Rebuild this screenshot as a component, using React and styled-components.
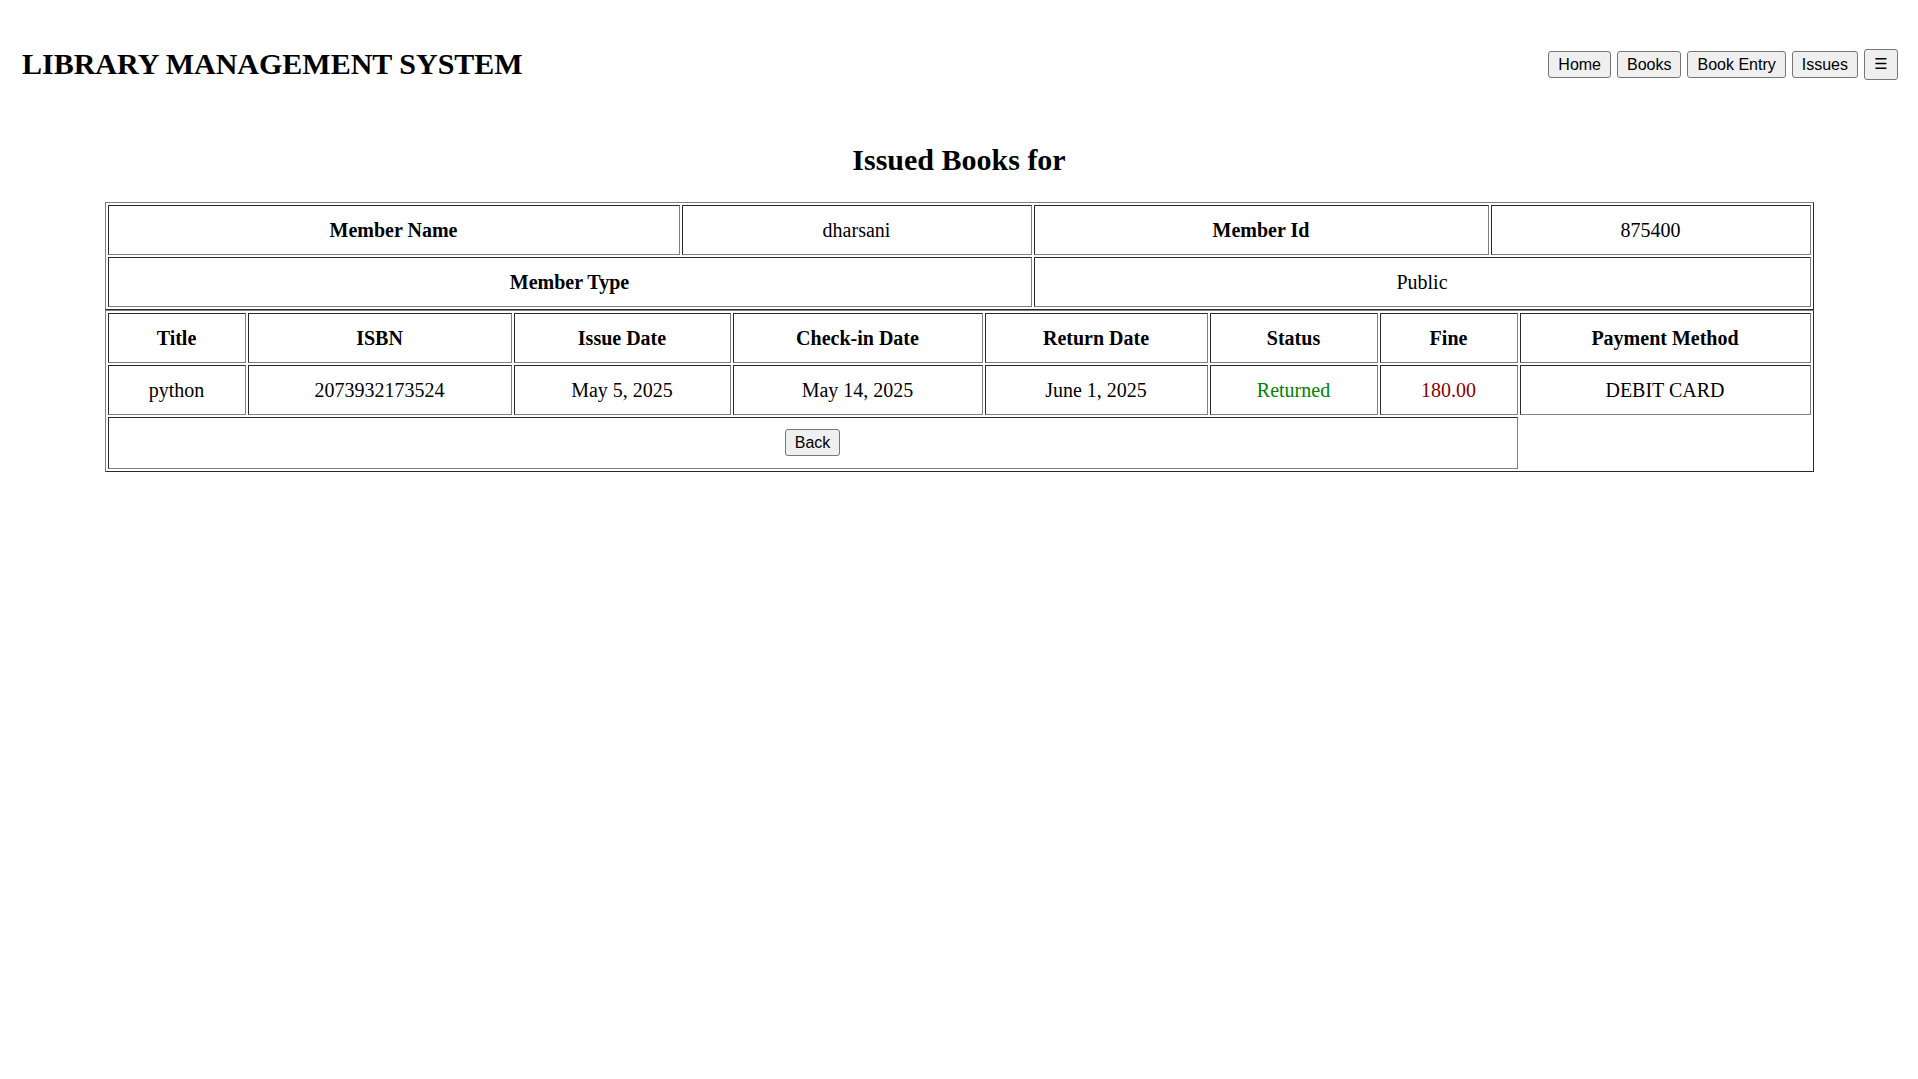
import React from "react";
import styled, { createGlobalStyle } from "styled-components";

const GlobalStyle = createGlobalStyle`
  html, body { background: #ffffff; }
  body {
    margin: 8px;
    font-family: "Liberation Serif", "Times New Roman", serif;
    color: #000000;
  }
`;

const Header = styled.header`
  display: flex;
  justify-content: space-between;
  align-items: center;
  padding: 39px 12px 0 14px;
`;

const Brand = styled.h1`
  margin: 0;
  font-size: 30px;
  line-height: 34px;
  font-weight: bold;
`;

const Nav = styled.nav`
  display: flex;
  align-items: center;
  gap: 6px;
`;

const Button = styled.button`
  font-family: "Liberation Sans", Arial, sans-serif;
  font-size: 16px;
  line-height: 19px;
  color: #000000;
  background: #efefef;
  border: 1px solid #767676;
  border-radius: 3px;
  padding: 3px 9px;
  cursor: pointer;
`;

const MenuButton = styled(Button)`
  width: 34px;
  height: 31px;
  padding: 0;
  font-family: "DejaVu Sans", sans-serif;
  font-size: 15px;
  line-height: 29px;
`;

const Main = styled.main`
  display: flex;
  flex-direction: column;
  align-items: center;
`;

const Title = styled.h2`
  margin: 63px 0 26px;
  font-size: 30px;
  line-height: 32px;
  font-weight: bold;
`;

const Table = styled.table`
  width: 1709px;
  table-layout: fixed;
  border-collapse: separate;
  border-spacing: 2px;
  border: 1px solid;
  border-color: #808080 #2a2a2a #2a2a2a #808080;
`;

const Th = styled.th`
  box-sizing: border-box;
  width: ${(p) => (p.$w ? `${p.$w}px` : "auto")};
  padding: 12px 10px;
  font-size: 20px;
  line-height: 24px;
  font-weight: bold;
  text-align: center;
  vertical-align: middle;
  border: 1px solid;
  border-color: #2a2a2a #808080 #808080 #2a2a2a;
`;

const Td = styled.td`
  box-sizing: border-box;
  width: ${(p) => (p.$w ? `${p.$w}px` : "auto")};
  padding: 12px 10px;
  font-size: 20px;
  line-height: 24px;
  text-align: center;
  vertical-align: middle;
  color: ${(p) => p.$color || "#000000"};
  border: 1px solid;
  border-color: #2a2a2a #808080 #808080 #2a2a2a;
`;

const ActionCell = styled(Td)`
  padding: 11px 10px 12px;
`;

const columns = [
  { label: "Title", w: 138 },
  { label: "ISBN", w: 264 },
  { label: "Issue Date", w: 217 },
  { label: "Check-in Date", w: 250 },
  { label: "Return Date", w: 223 },
  { label: "Status", w: 168 },
  { label: "Fine", w: 138 },
  { label: "Payment Method", w: 291 },
];

export default function App() {
  return (
    <>
      <GlobalStyle />
      <Header>
        <Brand>LIBRARY MANAGEMENT SYSTEM</Brand>
        <Nav>
          <Button>Home</Button>
          <Button>Books</Button>
          <Button>Book Entry</Button>
          <Button>Issues</Button>
          <MenuButton>☰</MenuButton>
        </Nav>
      </Header>
      <Main>
        <Title>Issued Books for</Title>
        <Table>
          <tbody>
            <tr>
              <Th $w={572}>Member Name</Th>
              <Td $w={350}>dharsani</Td>
              <Th $w={455}>Member Id</Th>
              <Td $w={320}>875400</Td>
            </tr>
            <tr>
              <Th colSpan={2}>Member Type</Th>
              <Td colSpan={2}>Public</Td>
            </tr>
          </tbody>
        </Table>
        <Table>
          <tbody>
            <tr>
              {columns.map((c) => (
                <Th key={c.label} $w={c.w}>
                  {c.label}
                </Th>
              ))}
            </tr>
            <tr>
              <Td>python</Td>
              <Td>2073932173524</Td>
              <Td>May 5, 2025</Td>
              <Td>May 14, 2025</Td>
              <Td>June 1, 2025</Td>
              <Td $color="#008000">Returned</Td>
              <Td $color="#8b0000">180.00</Td>
              <Td>DEBIT CARD</Td>
            </tr>
            <tr>
              <ActionCell colSpan={7}>
                <Button>Back</Button>
              </ActionCell>
            </tr>
          </tbody>
        </Table>
      </Main>
    </>
  );
}
